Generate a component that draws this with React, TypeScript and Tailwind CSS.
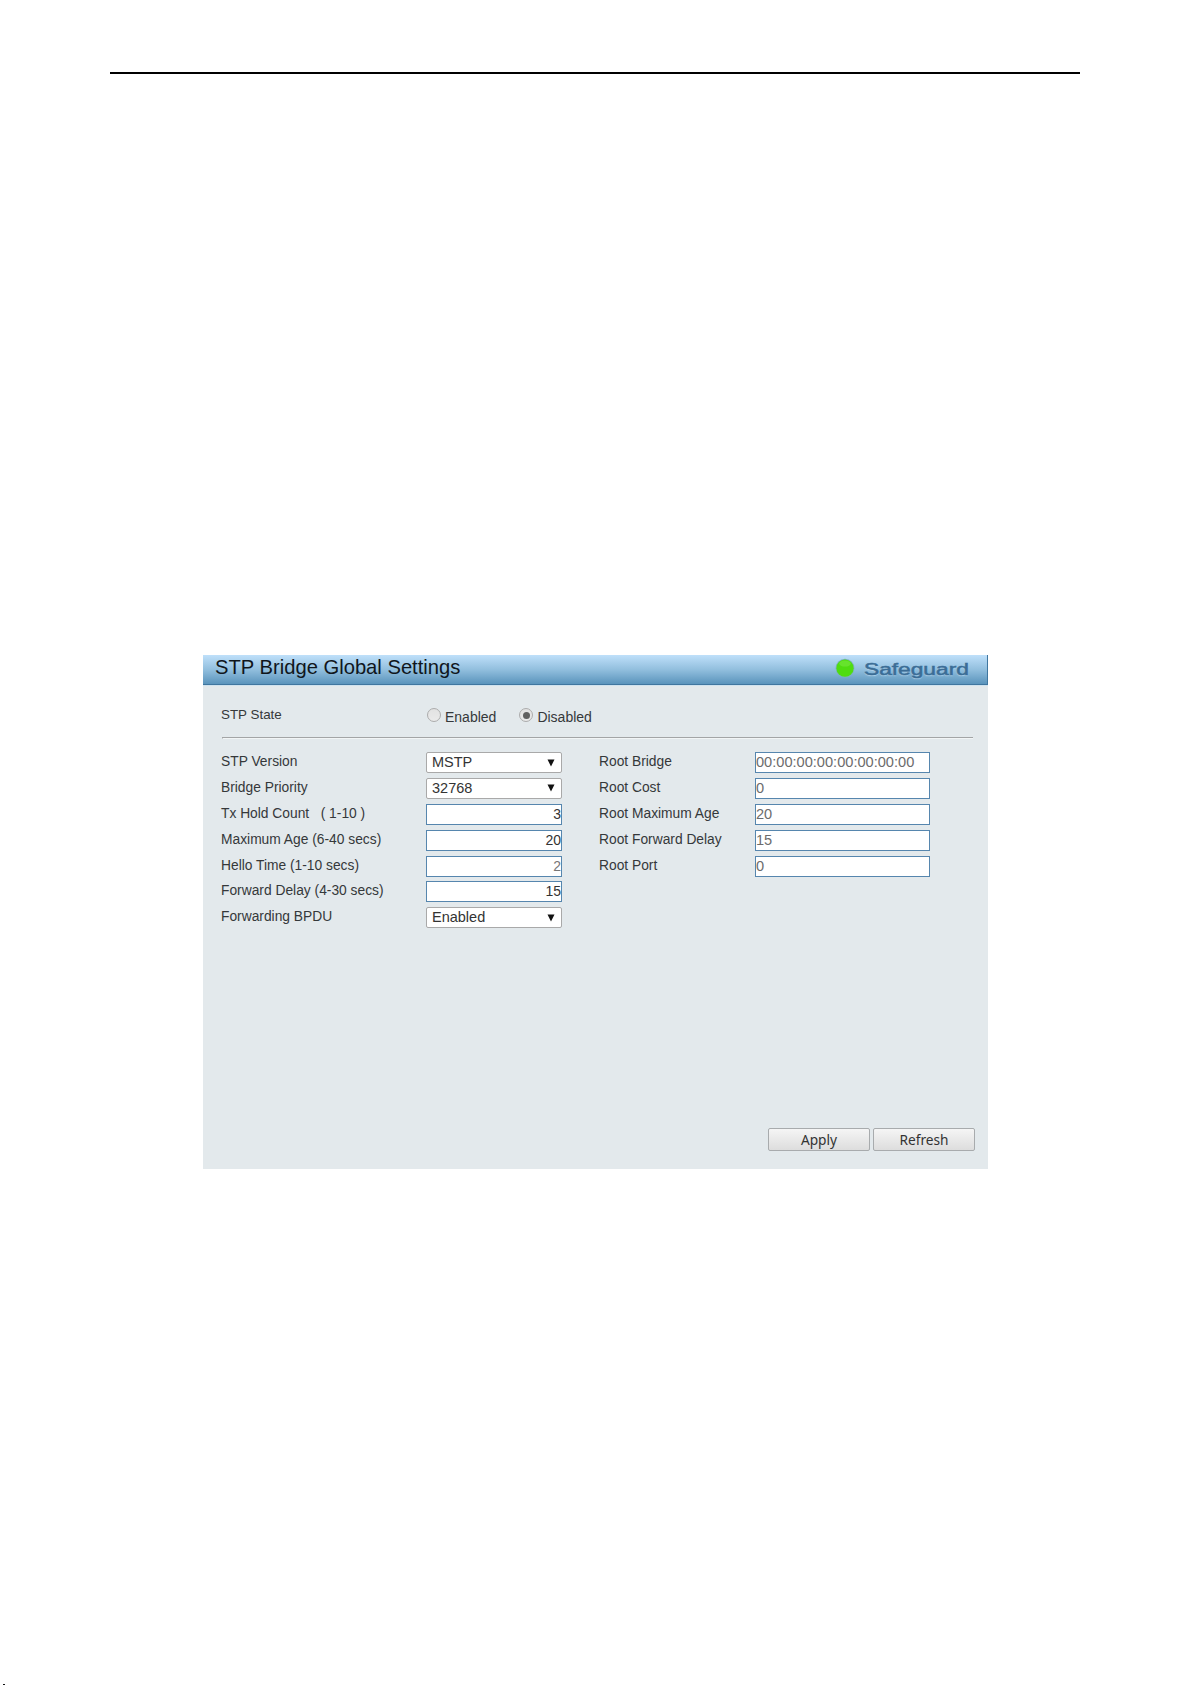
import React from "react";
import clsx from "clsx";

type Field = {
  label: string;
  value: string;
  kind: "select" | "input";
  disabled?: boolean;
};

const bridgeFields: Field[] = [
  { label: "STP Version", value: "MSTP", kind: "select" },
  { label: "Bridge Priority", value: "32768", kind: "select" },
  { label: "Tx Hold Count\u00a0\u00a0 ( 1-10 )", value: "3", kind: "input" },
  { label: "Maximum Age (6-40 secs)", value: "20", kind: "input" },
  { label: "Hello Time (1-10 secs)", value: "2", kind: "input", disabled: true },
  { label: "Forward Delay (4-30 secs)", value: "15", kind: "input" },
  { label: "Forwarding BPDU", value: "Enabled", kind: "select" },
];

const rootFields = [
  { label: "Root Bridge", value: "00:00:00:00:00:00:00:00" },
  { label: "Root Cost", value: "0" },
  { label: "Root Maximum Age", value: "20" },
  { label: "Root Forward Delay", value: "15" },
  { label: "Root Port", value: "0" },
];

const Label = ({ children }: { children: React.ReactNode }) => (
  <span className="block text-[13.8px] leading-[19px] whitespace-nowrap text-[#35383a]">
    {children}
  </span>
);

const Select = ({ value }: { value: string }) => (
  <div className="flex h-[21px] w-[136px] items-center justify-between rounded-xs border border-[#a9a9a9] bg-white pr-[6px] pl-[5px]">
    <span className="text-[14.5px] leading-[19px] text-[#333]">{value}</span>
    <svg width="8" height="8" viewBox="0 0 8 8">
      <path d="M0.5 0.5h7L4 7.5z" fill="#111" />
    </svg>
  </div>
);

const NumberBox = ({ value, disabled }: { value: string; disabled?: boolean }) => (
  <div
    className={clsx(
      "h-[21px] w-[136px] border border-[#5686ae] bg-white text-right text-[14px] leading-[18px]",
      disabled ? "text-[#777]" : "text-[#333]"
    )}
  >
    {value}
  </div>
);

const Radio = ({ label, checked }: { label: string; checked?: boolean }) => (
  <div className="flex items-start">
    <div className="flex h-[14px] w-[14px] items-center justify-center rounded-full border border-[#acacac] bg-linear-to-b from-[#e2e2e2] to-[#eaeaea]">
      {checked && <div className="h-[7px] w-[7px] rounded-full bg-[#606060]" />}
    </div>
    <span className="ml-[4px] text-[14px] leading-[18px] text-[#35383a]">
      {label}
    </span>
  </div>
);

const Button = ({ children }: { children: React.ReactNode }) => (
  <button className="h-[23px] w-[102px] rounded-xs border border-[#a8abad] bg-linear-to-b from-[#f5f5f5] to-[#dddddd] font-['Noto_Sans',sans-serif] text-[13.7px] leading-[21px] text-[#333]">
    {children}
  </button>
);

const Header = () => (
  <div className="flex h-[31px] justify-between border-b border-[#cfe2ee]">
    <div className="flex h-[30px] w-full justify-between border-r border-b border-[#3f769f] bg-linear-to-b from-[#bfe0fa] via-[#92bfde] to-[#5a94bc] pl-3">
      <h1 className="text-[20.2px] leading-6 whitespace-nowrap text-[#10161c]">
        STP Bridge Global Settings
      </h1>
      <div className="flex pt-[3px] pr-[17px]">
        <svg className="mr-[9px]" width="20" height="20" viewBox="0 0 20 20">
          <circle cx="10" cy="10.2" r="9.4" fill="#7db4ba" />
          <circle cx="10" cy="10.2" r="8.6" fill="#4fdc10" />
          <ellipse cx="10" cy="5.6" rx="5.8" ry="3" fill="#66e32c" />
        </svg>
        <div className="w-[106px]">
          <span className="inline-block origin-left scale-x-[1.42] text-[16px] leading-[20px] text-[#3b6d96] [-webkit-text-stroke:0.5px_#3b6d96] [text-shadow:0_1px_1px_#b5d7ef]">
            Safeguard
          </span>
        </div>
      </div>
    </div>
  </div>
);

const App = () => {
  return (
    <div className="flex h-[1685px] w-[1192px] flex-col overflow-hidden bg-white font-['Liberation_Sans',Arial,sans-serif]">
      <div className="mt-[72px] ml-[110px] h-[2px] w-[970px] shrink-0 bg-black" />

      <div className="mt-[581px] ml-[203px] flex h-[514px] w-[785px] shrink-0 flex-col bg-[#e3e9ec]">
        <Header />

        <div className="flex h-[51px] pt-[22px] pl-[18px]">
          <div className="-mt-[3px] w-[206px] text-[13.4px] leading-5 text-[#35383a]">
            STP State
          </div>
          <div className="flex gap-[23px]">
            <Radio label="Enabled" />
            <Radio label="Disabled" checked />
          </div>
        </div>

        <div className="ml-[19px] h-[2px] w-[751px] shrink-0 border-t border-l border-[#a3a5a6] border-b border-b-[#f2f5f6]" />

        <div className="mt-[13px] flex">
          <div className="pl-[18px]">
            {bridgeFields.map((field) => (
              <div key={field.label} className="flex h-[25.9px] items-start">
                <div className="w-[205px]">
                  <Label>{field.label}</Label>
                </div>
                {field.kind === "select" ? (
                  <Select value={field.value} />
                ) : (
                  <NumberBox value={field.value} disabled={field.disabled} />
                )}
              </div>
            ))}
          </div>

          <div className="pl-[37px]">
            {rootFields.map((field) => (
              <div key={field.label} className="flex h-[25.9px] items-start">
                <div className="w-[156px]">
                  <Label>{field.label}</Label>
                </div>
                <div className="h-[21px] w-[175px] border border-[#5686ae] bg-white text-[14.6px] leading-[19px] text-[#6c6c6c]">
                  {field.value}
                </div>
              </div>
            ))}
          </div>
        </div>

        <div className="mt-auto mr-[13px] mb-[18px] flex justify-end gap-[3px]">
          <Button>Apply</Button>
          <Button>Refresh</Button>
        </div>
      </div>

      <div className="mt-auto ml-[3px] h-px w-[2px] bg-[#111]" />
    </div>
  );
};

export default App;
